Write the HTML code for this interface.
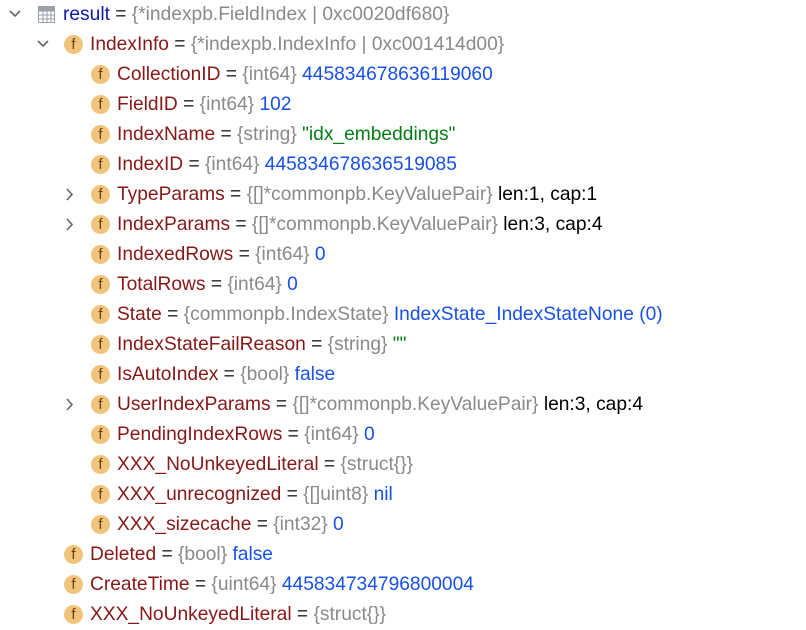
<!DOCTYPE html><html><head><style>
body{margin:0;width:806px;height:621px;background:#fff;overflow:hidden;font-family:"Liberation Sans","Noto Sans CJK SC",sans-serif;font-size:19.2px;position:relative}
.r{position:absolute;height:30px;line-height:30px;white-space:nowrap;color:#222}
.n{color:#871818}.t{color:#8a8a8a}.v{color:#1750eb}.s{color:#067d17}.k{color:#000}
.i{position:absolute;width:19px;height:19px;border-radius:50%;background:#f1c47b;color:#6b4010;font-size:15px;line-height:19px;text-align:center;top:5px}
</style></head><body>
<div class="r" style="top:0;left:0;width:800px">
<svg style="position:absolute;left:9px;top:9px" width="12" height="10"><path d="M1 2l5 5 5-5" fill="none" stroke="#666" stroke-width="1.6"/></svg>
<svg style="position:absolute;left:38px;top:6px" width="17" height="17"><rect x="0.5" y="0.5" width="16" height="16" fill="#fff" stroke="#9aa0a8"/><path d="M0 5h17M0 9h17M0 13h17M5 5v12M9 5v12M13 5v12" stroke="#9aa0a8"/><rect x="1" y="1" width="15" height="4" fill="#9aa0a8"/></svg>
<span style="position:absolute;left:63px"><span style="color:#0c1aa8">result</span> = <span class="t">{*indexpb.FieldIndex | 0xc0020df680}</span></span></div>
<div id="rows"></div>
<script>
var R=[
[1,1,'IndexInfo',' = <span class="t">{*indexpb.IndexInfo | 0xc001414d00}</span>',1],
[2,0,'CollectionID',' = <span class="t">{int64}</span> <span class="v">445834678636119060</span>'],
[2,0,'FieldID',' = <span class="t">{int64}</span> <span class="v">102</span>'],
[2,0,'IndexName',' = <span class="t">{string}</span> <span class="s">"idx_embeddings"</span>'],
[2,0,'IndexID',' = <span class="t">{int64}</span> <span class="v">445834678636519085</span>'],
[2,2,'TypeParams',' = <span class="t">{[]*commonpb.KeyValuePair}</span> <span class="k">len:1, cap:1</span>'],
[2,2,'IndexParams',' = <span class="t">{[]*commonpb.KeyValuePair}</span> <span class="k">len:3, cap:4</span>'],
[2,0,'IndexedRows',' = <span class="t">{int64}</span> <span class="v">0</span>'],
[2,0,'TotalRows',' = <span class="t">{int64}</span> <span class="v">0</span>'],
[2,0,'State',' = <span class="t">{commonpb.IndexState}</span> <span class="v">IndexState_IndexStateNone (0)</span>'],
[2,0,'IndexStateFailReason',' = <span class="t">{string}</span> <span class="s">""</span>'],
[2,0,'IsAutoIndex',' = <span class="t">{bool}</span> <span class="v">false</span>'],
[2,2,'UserIndexParams',' = <span class="t">{[]*commonpb.KeyValuePair}</span> <span class="k">len:3, cap:4</span>'],
[2,0,'PendingIndexRows',' = <span class="t">{int64}</span> <span class="v">0</span>'],
[2,0,'XXX_NoUnkeyedLiteral',' = <span class="t">{struct{}}</span>'],
[2,0,'XXX_unrecognized',' = <span class="t">{[]uint8}</span> <span class="v">nil</span>'],
[2,0,'XXX_sizecache',' = <span class="t">{int32}</span> <span class="v">0</span>'],
[1,0,'Deleted',' = <span class="t">{bool}</span> <span class="v">false</span>'],
[1,0,'CreateTime',' = <span class="t">{uint64}</span> <span class="v">445834734796800004</span>'],
[1,0,'XXX_NoUnkeyedLiteral',' = <span class="t">{struct{}}</span>']];
var h='';R.forEach(function(a,k){var top=30*(k+1),lv=a[0];var ix=lv==1?64:91,tx=lv==1?90:117,cx=lv==1?37:63;
var ch='';if(a[1]==1)ch='<svg style="position:absolute;left:'+cx+'px;top:9px" width="12" height="10"><path d="M1 2l5 5 5-5" fill="none" stroke="#666" stroke-width="1.6"/></svg>';
if(a[1]==2)ch='<svg style="position:absolute;left:'+(cx+2)+'px;top:8px" width="10" height="13"><path d="M2 1l5 5.5-5 5.5" fill="none" stroke="#666" stroke-width="1.6"/></svg>';
h+='<div class="r" style="top:'+top+'px;left:0;width:800px">'+ch+'<div class="i" style="left:'+ix+'px">f</div><span style="position:absolute;left:'+tx+'px"><span class="n">'+a[2]+'</span>'+a[3]+'</span></div>';});
document.getElementById('rows').innerHTML=h;
</script>
</body></html>
